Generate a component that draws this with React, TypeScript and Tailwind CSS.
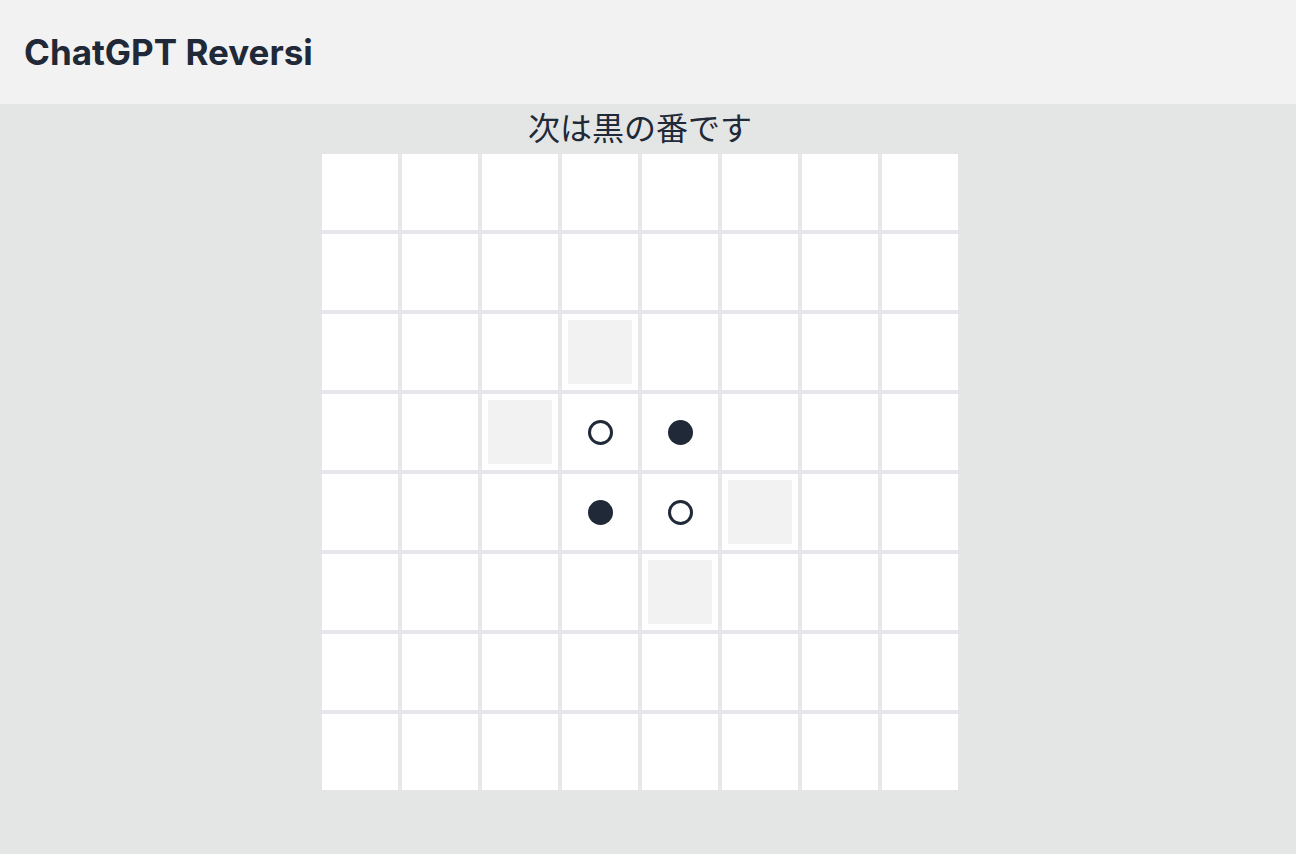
type Cell = 'B' | 'W' | null;

const initial: Cell[][] = Array.from({ length: 8 }, (_, r) =>
  Array.from({ length: 8 }, (_, c) => {
    if ((r === 3 && c === 3) || (r === 4 && c === 4)) return 'W';
    if ((r === 3 && c === 4) || (r === 4 && c === 3)) return 'B';
    return null;
  })
);

const hints = ['2-3', '3-2', '4-5', '5-4'];

export default function App() {
  return (
    <div className="min-h-screen bg-[#e4e6e6] text-[#1f2937] font-['Inter','Noto_Sans_CJK_JP',sans-serif]">
      <header className="bg-[#f2f2f2] px-6 py-8">
        <h1 className="text-[35px] font-bold leading-10">ChatGPT Reversi</h1>
      </header>
      <main className="flex flex-col items-center pr-4">
        <p className="mt-0.5 mb-2 text-[32px] leading-10 font-['Noto_Sans_CJK_JP',sans-serif]">次は黒の番です</p>
        <div className="grid grid-cols-8 gap-1 bg-[#e5e7eb]">
          {initial.map((row, r) =>
            row.map((cell, c) => (
              <div key={`${r}-${c}`} className="w-[76px] h-[76px] bg-white flex items-center justify-center">
                {hints.includes(`${r}-${c}`) && <div className="w-16 h-16 bg-[#f2f2f2]" />}
                {cell === 'B' && <div className="w-[25px] h-[25px] rounded-full bg-[#1f2937]" />}
                {cell === 'W' && <div className="w-[25px] h-[25px] rounded-full bg-white border-[3px] border-[#1f2937]" />}
              </div>
            ))
          )}
        </div>
      </main>
    </div>
  );
}
